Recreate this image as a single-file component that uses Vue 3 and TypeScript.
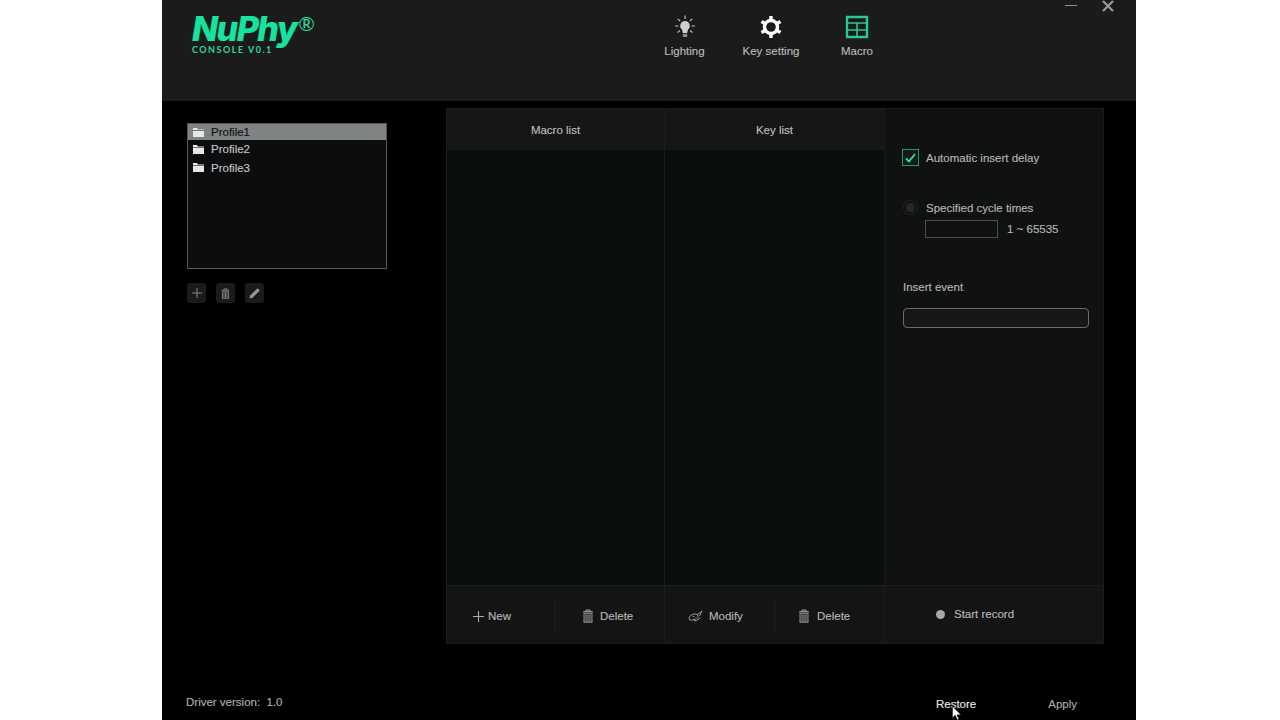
<script setup lang="ts">
const profiles = ['Profile1', 'Profile2', 'Profile3']
const trash = 'M2.500 3h11M5.800 3V1.300h4.400V3M3.500 4.800h9V15h-9z M5.800 6v8M8 6v8M10.200 6v8'
</script>

<template>
  <div class="window">
    <header class="header">
      <div class="logo">
        <div class="brand"><span class="brand-name">NuPhy</span><span class="reg">®</span></div>
        <div class="console">CONSOLE V0.1</div>
      </div>
      <nav class="nav">
        <div class="nav-item lighting">
          <svg width="24" height="24" viewBox="0 0 24 24" fill="none" stroke="#bdbdbd" stroke-width="1.200">
            <path d="M12 .5v3.500M4.800 3.800l2.400 2.400M19.200 3.800l-2.400 2.400M2 11h3.500M18.500 11H22M6.800 15.500l-2.200 2.200M17.200 15.500l2.200 2.200"/>
            <path d="M12 6a4.800 4.800 0 0 0-3 8.500l.8 3.500h4.400l.8-3.500A4.800 4.800 0 0 0 12 6z" fill="#cfcfcf" stroke="none"/>
            <path d="M9.800 18.800h4.400v3.200h-4.400z" fill="#8a8a8a" stroke="none"/>
          </svg>
          <span>Lighting</span>
        </div>
        <div class="nav-item keyset">
          <svg width="24" height="24" viewBox="0 0 24 24" fill="none">
            <circle cx="12" cy="12" r="6.500" stroke="#fff" stroke-width="3.400"/>
            <path d="M12 1v4M12 19v4M2.500 6.500l3.500 2M18 15.500l3.500 2M2.500 17.500l3.500-2M18 8.500l3.500-2" stroke="#fff" stroke-width="3.400"/>
          </svg>
          <span>Key setting</span>
        </div>
        <div class="nav-item macro">
          <svg width="24" height="24" viewBox="0 0 24 24" fill="none" stroke="#2bc78f">
            <path d="M2 2h20v20H2z" stroke-width="2.400"/>
            <path d="M2 8h20M2 15h20M12 8v14" stroke-width="1.600"/>
          </svg>
          <span>Macro</span>
        </div>
      </nav>
      <div class="win-controls">
        <span class="minimize"></span>
        <svg class="close" width="12" height="12" viewBox="0 0 12 12"><path d="M1 1l10 10M11 1L1 11" stroke="#9b9b9b" stroke-width="2.200"/></svg>
      </div>
    </header>

    <main class="body">
      <aside class="side">
        <ul class="profiles">
          <li v-for="(p, i) in profiles" :key="p" class="profile" :class="{ active: i === 0 }">
            <svg width="11" height="9" viewBox="0 0 11 9"><path d="M0 0h4l1 1.500h6V9H0z" fill="#e8e8e8"/><path d="M0 2.500h11" stroke="#555" stroke-width=".8"/></svg>
            <span>{{ p }}</span>
          </li>
        </ul>
        <div class="tools">
          <button class="tool">
            <svg width="10" height="10" viewBox="0 0 10 10"><path d="M5 0v10M0 5h10" stroke="#888" stroke-width="1"/></svg>
          </button>
          <button class="tool">
            <svg width="11" height="11" viewBox="0 0 16 16" fill="none" stroke="#888" stroke-width="1.300"><path :d="trash"/></svg>
          </button>
          <button class="tool">
            <svg width="12" height="12" viewBox="0 0 12 12"><path d="M0.500 11.500l.7-3L8.500 1.200l2.300 2.300-7.300 7.300z" fill="#999"/></svg>
          </button>
        </div>
      </aside>

      <section class="panel">
        <div class="col col-a">
          <div class="col-head">Macro list</div>
          <div class="col-list"></div>
          <div class="col-foot">
            <div class="act act-new">
              <svg width="11" height="11" viewBox="0 0 11 11"><path d="M5.500 0v11M0 5.500h11" stroke="#aaa" stroke-width="1.100"/></svg>
              <span>New</span>
            </div>
            <div class="act act-del">
              <svg width="14" height="14" viewBox="0 0 16 16" fill="none" stroke="#8e8e8e" stroke-width="1.300"><path :d="trash"/></svg>
              <span>Delete</span>
            </div>
          </div>
        </div>
        <div class="col col-b">
          <div class="col-head">Key list</div>
          <div class="col-list"></div>
          <div class="col-foot">
            <div class="act act-mod">
              <svg width="16" height="12" viewBox="0 0 16 12" fill="none" stroke="#9a9a9a" stroke-width="1"><path d="M1 9c0-3 3-5 6-5 2 0 3 1 3 2.500S8 9 6 9.500 2 11 1 9zM4.500 6l2 1M6 10.500c3 .5 5-1 6-3M9 5l5-4-2.500 5"/></svg>
              <span>Modify</span>
            </div>
            <div class="act act-del2">
              <svg width="14" height="14" viewBox="0 0 16 16" fill="none" stroke="#8e8e8e" stroke-width="1.300"><path :d="trash"/></svg>
              <span>Delete</span>
            </div>
          </div>
        </div>
        <div class="col col-side">
          <div class="options">
            <label class="check-row">
              <span class="check">
                <svg width="11" height="10" viewBox="0 0 11 10"><path d="M1 5.500l3 3L10 1" fill="none" stroke="#2ee6a0" stroke-width="1.800"/></svg>
              </span>
              <span>Automatic insert delay</span>
            </label>
            <div class="radio-row">
              <span class="radio"><i></i></span>
              <span>Specified cycle times</span>
            </div>
            <div class="cycle-row">
              <span class="cycle-box"></span>
              <span>1 ~ 65535</span>
            </div>
            <div class="insert-label">Insert event</div>
            <div class="insert-box"></div>
          </div>
          <div class="record"><i class="dot"></i><span>Start record</span></div>
        </div>
      </section>
    </main>

    <footer class="footer">
      <span class="driver">Driver version:&nbsp; 1.0</span>
      <div class="foot-btns">
        <span class="restore">Restore</span>
        <span class="apply">Apply</span>
      </div>
    </footer>

    <svg class="cursor" width="12" height="16" viewBox="0 0 12 17"><path d="M1 1v13l3-3 2.200 5 2-.9L6 10.500h4.500z" fill="#fff" stroke="#000" stroke-width=".8"/></svg>
  </div>
</template>

<style>
html, body { margin: 0; background: #fff; }
</style>

<style scoped>
.window {
  position: relative;
  width: 974px;
  height: 720px;
  margin-left: 162px;
  background: #000;
  color: #c4c4c4;
  font-family: "Liberation Sans", Arial, sans-serif;
  font-size: 11.5px;
  -webkit-text-stroke: 0.15px currentColor;
  overflow: hidden;
}
.header {
  position: relative;
  display: flex;
  height: 101px;
  background: #1b1b1b;
  box-sizing: border-box;
  padding-left: 30px;
}
.logo { padding-top: 13px; color: #17e3a0; width: 472px; }
.brand { display: flex; align-items: flex-start; height: 32px; }
.brand-name {
  font-family: Inter, sans-serif;
  font-weight: 800;
  font-style: italic;
  font-size: 34px;
  line-height: 32px;
  letter-spacing: -1.5px;
}
.reg { font-family: Lato, sans-serif; font-size: 20px; line-height: 20px; margin-left: 2px; margin-top: 0; color: #2fd9a0; -webkit-text-stroke: 0; }
.console {
  font-family: Lato, sans-serif;
  font-weight: 700;
  font-size: 9px;
  letter-spacing: 1.5px;
  line-height: 10px;
  color: #2fd3a0;
  -webkit-text-stroke: 0;
}
.nav { display: flex; padding-top: 15px; }
.nav-item { display: flex; flex-direction: column; align-items: center; gap: 6px; color: #b9b9b9; line-height: 13px; }
.lighting { width: 41px; }
.keyset { width: 58px; margin-left: 37px; }
.macro { width: 32px; margin-left: 41px; }
.win-controls { position: absolute; top: 0; right: 22px; display: flex; align-items: flex-start; gap: 25px; }
.minimize { width: 12px; height: 1px; margin-top: 5px; background: #8e8e8e; }
.close { margin-top: 0; }
.body { display: flex; height: 543px; padding-top: 7px; box-sizing: content-box; }
.side { width: 284px; padding: 15px 0 0 25px; box-sizing: border-box; }
.profiles {
  width: 200px;
  height: 146px;
  box-sizing: border-box;
  margin: 0;
  padding: 0;
  list-style: none;
  background: #0b0d0f;
  border: 1px solid #555;
  color: #c4c4c4;
}
.profile { display: flex; align-items: center; height: 18.5px; padding-left: 5px; gap: 7px; }
.profile.active { background: #7f8384; color: #141414; height: 16px; }
.tools { display: flex; gap: 10px; margin-top: 14px; }
.tool {
  display: flex;
  align-items: center;
  justify-content: center;
  width: 19px;
  height: 20px;
  padding: 0;
  border: 0;
  border-radius: 3px;
  background: #1b1b1b;
}
.panel {
  display: flex;
  width: 658px;
  height: 536px;
  box-sizing: border-box;
  border: 1px solid #1b1d1c;
  background: #131514;
}
.col { display: flex; flex-direction: column; border-right: 1px solid #1b1d1c; box-sizing: border-box; }
.col-a { width: 218px; }
.col-b { width: 220px; }
.col-side { border-right: 0; flex: 1; background: #101211; position: relative; }
.col-head {
  height: 41px;
  display: flex;
  align-items: center;
  justify-content: center;
  background: #151615;
  color: #bdbdbd;
  box-sizing: border-box;
}
.col-list { flex: 1; background: #0b0e0f; }
.col-foot {
  position: relative;
  display: flex;
  align-items: center;
  height: 58px;
  border-top: 1px solid #1b1d1c;
  box-sizing: border-box;
  background: #131413;
  color: #b4b4b4;
}
.act { display: flex; align-items: center; line-height: 16px; margin-top: 3px; }
.act-new { gap: 4px; margin-left: 26px; width: 82px; height: 32px; border-right: 1px solid #1e1f1e; }
.act-del { gap: 5px; margin-left: 25px; }
.act-mod { gap: 5px; margin-left: 23px; width: 86px; height: 32px; border-right: 1px solid #1e1f1e; }
.act-del2 { gap: 6px; margin-left: 22px; }
.options { flex: 1; padding: 40px 0 0 18px; color: #b4b4b4; }
.check-row { display: flex; align-items: center; gap: 7px; height: 17px; margin-left: -1px; }
.check {
  display: flex;
  align-items: center;
  justify-content: center;
  width: 17px;
  height: 17px;
  box-sizing: border-box;
  border: 1px solid #1f9a72;
  background: #141a18;
}
.radio-row { display: flex; align-items: center; gap: 8px; margin-top: 33px; height: 17px; }
.radio { display: flex; align-items: center; justify-content: center; width: 15px; height: 15px; border: 1px solid #222; box-sizing: border-box; border-radius: 50%; }
.radio i { width: 9px; height: 9px; border-radius: 50%; background: #262827; }
.cycle-row { display: flex; align-items: center; gap: 9px; margin: 4px 0 0 23px; }
.cycle-box { width: 73px; height: 18px; box-sizing: border-box; border: 1px solid #4c4d4c; margin-left: -1px; }
.insert-label { margin-top: 43px; line-height: 13px; }
.insert-box { width: 186px; height: 20px; margin-top: 14px; box-sizing: border-box; border: 1px solid #6a6c6b; border-radius: 4px; background: #161817; }
.record {
  display: flex;
  align-items: center;
  gap: 9px;
  height: 58px;
  padding: 0 0 1px 51px;
  box-sizing: border-box;
  border-top: 1px solid #1b1d1c;
  background: #131413;
  color: #b8b8b8;
}
.dot { width: 9px; height: 9px; border-radius: 50%; background: #a8a8a8; }
.footer {
  display: flex;
  justify-content: space-between;
  padding: 45px 0 0 24px;
  height: 76px;
  box-sizing: border-box;
}
.driver { color: #aeaeae; line-height: 13px; }
.foot-btns { display: flex; padding-top: 2px; margin-right: 59px; }
.restore { color: #e4e4e4; }
.apply { margin-left: 72px; color: #aaa; }
.cursor { position: absolute; left: 789px; top: 705px; }
</style>
